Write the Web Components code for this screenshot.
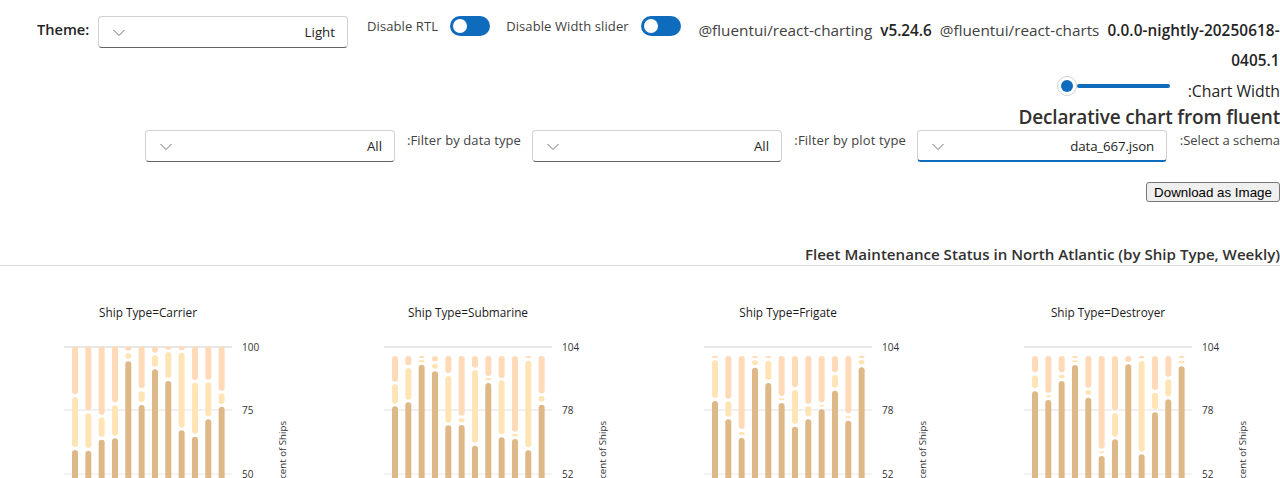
<!DOCTYPE html>
<html lang="en">
<head>
<meta charset="utf-8">
<title>Declarative chart</title>
<style>
  html, body { margin: 0; height: 478px; overflow: hidden; background: #fff; }
  body { font-family: "Open Sans", "Noto Sans", sans-serif; color: #242424; }
</style>
</head>
<body>
<demo-page></demo-page>

<script>
class DemoDropdown extends HTMLElement {
  constructor() {
    super();
    this.attachShadow({ mode: 'open' });
    this.shadowRoot.innerHTML = `
      <style>
        :host {
          display: block;
          flex: none;
          width: 250px;
          height: 32px;
          box-sizing: border-box;
          direction: rtl;
          border: 1px solid #d1d1d1;
          border-bottom-color: #616161;
          border-radius: 4px;
          background: #fff;
        }
        :host([focused]) {
          border-bottom: 2px solid #0f6cbd;
        }
        #inner {
          display: flex;
          align-items: center;
          justify-content: space-between;
          height: 100%;
          padding: 0 12px 0 13px;
          box-sizing: border-box;
          font-size: 13.3px;
          color: #242424;
        }
        svg { display: block; flex: none; margin-top: 2px; }
      </style>
      <div id="inner">
        <span><slot></slot></span>
        <svg width="14" height="8" viewBox="0 0 14 8" fill="none" stroke="#707070" stroke-width="1">
          <path d="M1.5 1 L7 6.5 L12.5 1" />
        </svg>
      </div>
    `;
  }
}

class DemoSwitch extends HTMLElement {
  constructor() {
    super();
    this.attachShadow({ mode: 'open' });
    this.shadowRoot.innerHTML = `
      <style>
        :host {
          display: flex;
          flex: none;
          align-items: center;
          width: 40px;
          height: 20px;
          box-sizing: border-box;
          padding: 0 3px;
          border-radius: 10px;
          background: #0f6cbd;
        }
        #knob {
          width: 14px;
          height: 14px;
          border-radius: 50%;
          background: #fff;
        }
      </style>
      <div id="knob"></div>
    `;
  }
}

class DemoSlider extends HTMLElement {
  constructor() {
    super();
    this.attachShadow({ mode: 'open' });
    this.shadowRoot.innerHTML = `
      <style>
        :host {
          display: flex;
          flex: none;
          align-items: center;
          width: 113px;
          height: 20px;
        }
        #thumb {
          flex: none;
          width: 20px;
          height: 20px;
          box-sizing: border-box;
          border: 1px solid #d1d1d1;
          border-radius: 50%;
          display: flex;
          align-items: center;
          justify-content: center;
          background: #fff;
        }
        #thumb::after {
          content: '';
          width: 12px;
          height: 12px;
          border-radius: 50%;
          background: #0f6cbd;
        }
        #track {
          flex: 1;
          height: 4px;
          border-radius: 2px;
          background: #0f6cbd;
        }
      </style>
      <div id="thumb"></div>
      <div id="track"></div>
    `;
  }
}

class DemoFilter extends HTMLElement {
  constructor() {
    super();
    this.attachShadow({ mode: 'open' });
    this.shadowRoot.innerHTML = `
      <style>
        :host {
          display: flex;
          direction: rtl;
          align-items: flex-start;
          gap: 12px;
        }
        label {
          flex: none;
          font-size: 13px;
          line-height: 20px;
          white-space: nowrap;
          color: #424242;
        }
      </style>
      <label></label>
      <demo-dropdown><slot></slot></demo-dropdown>
    `;
    const label = this.shadowRoot.querySelector('label');
    label.textContent = this.getAttribute('label');
    label.style.width = this.getAttribute('label-width') + 'px';
    label.style.letterSpacing = (this.getAttribute('label-spacing') || 0) + 'px';
    if (this.hasAttribute('focused')) {
      this.shadowRoot.querySelector('demo-dropdown').setAttribute('focused', '');
    }
  }
}

class BarChart extends HTMLElement {
  constructor() {
    super();
    this.attachShadow({ mode: 'open' });
  }

  connectedCallback() {
    const ticks = this.getAttribute('ticks').split(',');
    const bars = JSON.parse(this.getAttribute('bars'));
    const gridY = [347, 410, 474];
    const gridColors = ['#d0d0d0', '#e3e3e3', '#e8e8e8'];

    const grid = gridY.map((y, i) => `
      <line x1="64" x2="232" y1="${y - 266}" y2="${y - 266}" stroke="${gridColors[i]}" />
      <text x="242" y="${y - 266 + 3.5}" class="tick">${ticks[i]}</text>
    `).join('');

    // bar values are [peach top, peach bottom, yellow top, yellow bottom, tan top], image y in 3x crop
    const rect = (x, top, bottom, fill) => {
      const y = 300 + top / 3 - 266;
      const h = (bottom - top) / 3;
      return `<rect x="${x}" y="${y}" width="6" height="${h}" rx="3" ry="${Math.min(3, h / 2)}" fill="${fill}" />`;
    };
    const columns = bars.map((b, i) => {
      const x = 72 + i * 13.33;
      let out = rect(x, b[0], b[1], '#ffdab9');
      if (b[2] != null) out += rect(x, b[2], b[3], '#ffe4b5');
      out += rect(x, b[4], 700, '#deb887');
      return out;
    }).join('');

    this.shadowRoot.innerHTML = `
      <style>
        :host {
          display: block;
          flex: none;
          width: 320px;
          height: 300px;
        }
        svg { display: block; font-family: "Open Sans", "Noto Sans", sans-serif; }
        .title { font-size: 11.8px; fill: #1a1a1a; text-anchor: middle; }
        .tick { font-size: 10px; fill: #333; }
        .axis { font-size: 9.7px; fill: #333; }
      </style>
      <svg width="320" height="300" viewBox="0 0 320 300">
        <text x="148" y="51" class="title">${this.getAttribute('heading')}</text>
        ${grid}
        ${columns}
        <text class="axis" text-anchor="middle" transform="translate(285.5 191.5) rotate(-90)">Percent of Ships</text>
      </svg>
    `;
  }
}

class DemoPage extends HTMLElement {
  constructor() {
    super();
    this.attachShadow({ mode: 'open' });
    this.shadowRoot.innerHTML = `
      <style>
        :host {
          display: block;
          width: 1280px;
          font-size: 14px;
          color: #242424;
        }
        #top {
          display: flex;
          align-items: flex-start;
          padding: 16px 0 0 37px;
          height: 59px;
        }
        #theme-label {
          flex: none;
          font-weight: 600;
          font-size: 14.6px;
          line-height: 27px;
          width: 61px;
          white-space: nowrap;
        }
        .switch-label {
          font-size: 13px;
          line-height: 20px;
          color: #424242;
          white-space: nowrap;
          letter-spacing: 0.1px;
        }
        #rtl { display: flex; gap: 12px; margin-left: 19px; }
        #width { display: flex; gap: 12px; margin-left: 16px; }
        #versions {
          flex: none;
          width: 583px;
          margin: -1px 0 0 16px;
          line-height: 30px;
          text-align: right;
          font-size: 15.3px;
          color: #424242;
        }
        #versions b { font-weight: 600; color: #242424; margin: 0 4px; }
        #versions i { font-style: normal; font-weight: 600; color: #242424; margin-left: 4px; letter-spacing: 0.1px; }
        #chart-width {
          display: flex;
          direction: rtl;
          gap: 17px;
          height: 30px;
          margin-top: 1px;
        }
        #chart-width span { width: 93px; white-space: nowrap; line-height: 30px; font-size: 15.8px; }
        #chart-width demo-slider { direction: ltr; }
        h1 {
          margin: 0;
          height: 24px;
          line-height: 22px;
          direction: rtl;
          font-size: 19px;
          font-weight: 600;
          letter-spacing: -0.17px;
          color: #323130;
        }
        #filters {
          display: flex;
          direction: rtl;
          gap: 11px;
        }
        #download {
          display: flex;
          direction: rtl;
          margin-top: 20px;
        }
        button {
          width: 134px;
          height: 20px;
          box-sizing: border-box;
          padding: 0;
          border: 1px solid #767676;
          border-radius: 3px;
          background: #efefef;
          font: 13.33px "Liberation Sans", Arial, sans-serif;
          color: #000;
        }
        h2 {
          margin: 42px 0 0;
          height: 21px;
          line-height: 21px;
          direction: rtl;
          font-size: 15.1px;
          font-weight: 600;
          white-space: nowrap;
          color: #323130;
          border-bottom: 1px solid #d9d9d9;
        }
        #charts { display: flex; }
      </style>
      <div id="top">
        <div id="theme-label">Theme:</div>
        <demo-dropdown>Light</demo-dropdown>
        <div id="rtl"><span class="switch-label">Disable RTL</span><demo-switch></demo-switch></div>
        <div id="width"><span class="switch-label">Disable Width slider</span><demo-switch></demo-switch></div>
        <div id="versions">@fluentui/react-charting <b>v5.24.6</b> @fluentui/react-charts <i>0.0.0-nightly-20250618-<br>0405.1</i></div>
      </div>
      <div id="chart-width">
        <span>Chart Width:</span>
        <demo-slider></demo-slider>
      </div>
      <h1>Declarative chart from fluent</h1>
      <div id="filters">
        <demo-filter label="Select a schema:" label-width="101" focused style="letter-spacing: -0.15px">data_667.json</demo-filter>
        <demo-filter label="Filter by plot type:" label-width="112" label-spacing="0.15">All</demo-filter>
        <demo-filter label="Filter by data type:" label-width="114" label-spacing="0.1">All</demo-filter>
      </div>
      <div id="download"><button>Download as Image</button></div>
      <h2>Fleet Maintenance Status in North Atlantic (by Ship Type, Weekly)</h2>
      <div id="charts"></div>
    `;

    const charts = [
      ['Ship Type=Carrier', '100,75,50', [[139,283,291,441,450],[139,331,340,444,452],[139,344,352,411,419],[139,307,316,407,415],[139,152,159,176,184],[139,265,274,306,315],[139,158,166,200,208],[139,149,156,234,243],[139,150,158,383,391],[139,240,248,401,410],[139,239,247,349,358],[139,272,280,312,320]]],
      ['Ship Type=Submarine', '104,78,52', [[168,245,253,311,319],[168,196,204,299,307],[168,174,180,187,194],[168,184,191,206,214],[168,219,228,368,376],[168,347,355,367,375],[168,203,210,428,437],[168,228,234,241,249],[168,234,241,403,412],[168,395,402,409,417],[168,174,182,442,451],[168,280,288,305,314]]],
      ['Ship Type=Frigate', '104,78,52', [[167,174,181,294,303],[168,296,304,350,358],[168,387,396,405,414],[168,174,181,195,203],[168,174,182,240,249],[168,288,294,301,309],[168,262,270,371,380],[168,311,318,349,358],[168,307,315,320,328],[168,217,225,263,272],[168,340,348,354,362],[167,174,180,193,202]]],
      ['Ship Type=Destroyer', '104,78,52', [[168,217,226,264,274],[168,278,286,291,300],[168,217,224,235,243],[168,174,181,187,195],[168,263,270,285,293],[168,446,454,460,468],[168,331,339,410,418],[168,186,null,null,193],[168,175,183,455,463],[168,270,278,328,337],[168,230,238,289,298],[168,174,182,190,199]]],
    ];
    const holder = this.shadowRoot.querySelector('#charts');
    charts.forEach(([heading, ticks, bars]) => {
      const chart = document.createElement('bar-chart');
      chart.setAttribute('heading', heading);
      chart.setAttribute('ticks', ticks);
      chart.setAttribute('bars', JSON.stringify(bars));
      holder.appendChild(chart);
    });
  }
}

customElements.define('demo-dropdown', DemoDropdown);
customElements.define('demo-switch', DemoSwitch);
customElements.define('demo-slider', DemoSlider);
customElements.define('demo-filter', DemoFilter);
customElements.define('bar-chart', BarChart);
customElements.define('demo-page', DemoPage);
</script>
</body>
</html>
